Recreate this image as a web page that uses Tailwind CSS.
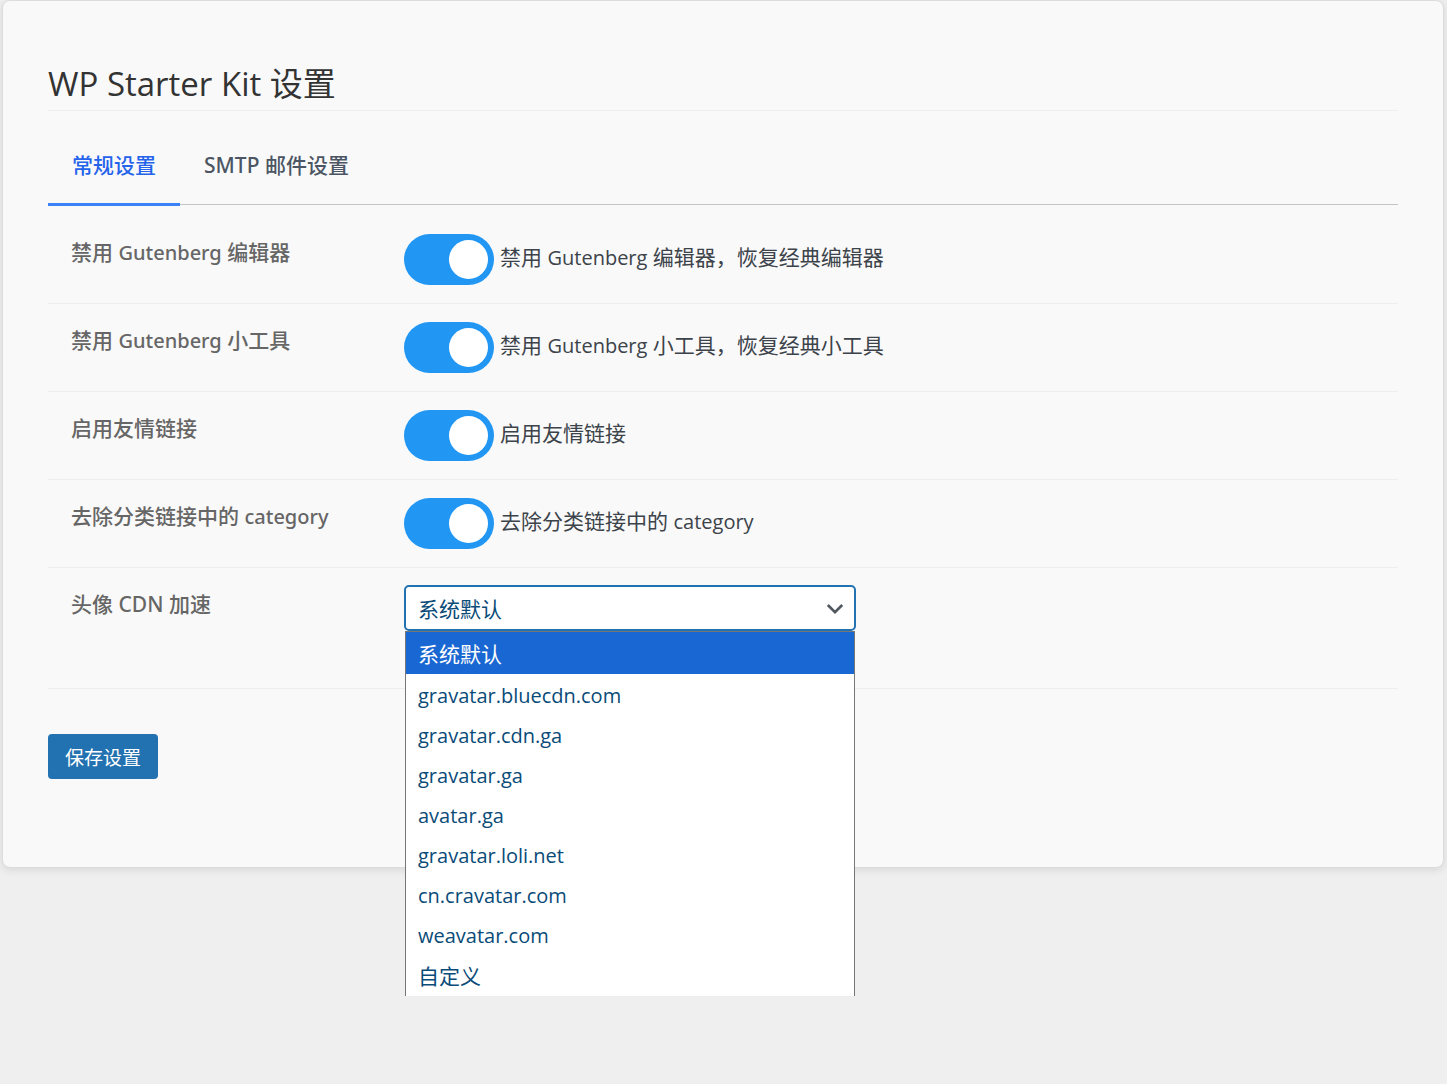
<!DOCTYPE html>
<html lang="zh-CN">
  <head>
    <meta charset="UTF-8" />
    <meta name="viewport" content="width=device-width, initial-scale=1.0" />
    <title>WP Starter Kit 设置</title>
    <script src="https://cdn.jsdelivr.net/npm/@tailwindcss/browser@4"></script>
  </head>
  <body class="min-h-screen bg-[#efefef] pl-[2px] pr-[3px] font-['Open_Sans','Noto_Sans_CJK_SC',sans-serif] text-[21px] leading-7 text-[#3c434a]">
    <main class="rounded-lg border border-[#dcdcdc] bg-[#f9f9f9] px-[45px] pt-[60px] pb-[88px] shadow-[0_2px_8px_rgba(0,0,0,0.1)]">
      <h1 class="border-b border-[#eeeeee] pb-1 text-[33px] leading-[45px] text-[#333333]">WP Starter Kit 设置</h1>

      <!-- Tabs -->
      <nav class="mt-8 flex border-b border-[#c3c4c7] font-['Noto_Sans','Noto_Sans_CJK_SC',sans-serif] font-medium">
        <a href="#general" class="-mb-[2px] border-b-3 border-[#3b82f6] px-6 pt-2 pb-6 text-[#2563eb]">常规设置</a>
        <a href="#smtp" class="px-6 pt-2 pb-6 text-[#4b5563]">SMTP 邮件设置</a>
      </nav>

      <form class="pt-[11px]">
        <div class="flex border-b border-[#eeeeee] py-[18px] pl-[23px]">
          <label for="disable-editor" class="w-[333px] shrink-0 pt-1 font-['Noto_Sans','Noto_Sans_CJK_SC',sans-serif] font-medium text-[#666666]">禁用 <span class="text-[20px]">Gutenberg</span> 编辑器</label>
          <div class="flex items-center gap-[6px]">
            <input id="disable-editor" type="checkbox" checked class="flex h-[51px] w-[90px] appearance-none items-center rounded-full bg-[#ccc] px-[6px] before:size-[39px] before:rounded-full before:bg-white checked:justify-end checked:bg-[#2196f3]" />
            <label for="disable-editor" class="pb-1">禁用 <span class="text-[20px]">Gutenberg</span> 编辑器，恢复经典编辑器</label>
          </div>
        </div>
        <div class="flex border-b border-[#eeeeee] py-[18px] pl-[23px]">
          <label for="disable-widgets" class="w-[333px] shrink-0 pt-1 font-['Noto_Sans','Noto_Sans_CJK_SC',sans-serif] font-medium text-[#666666]">禁用 <span class="text-[20px]">Gutenberg</span> 小工具</label>
          <div class="flex items-center gap-[6px]">
            <input id="disable-widgets" type="checkbox" checked class="flex h-[51px] w-[90px] appearance-none items-center rounded-full bg-[#ccc] px-[6px] before:size-[39px] before:rounded-full before:bg-white checked:justify-end checked:bg-[#2196f3]" />
            <label for="disable-widgets" class="pb-1">禁用 <span class="text-[20px]">Gutenberg</span> 小工具，恢复经典小工具</label>
          </div>
        </div>
        <div class="flex border-b border-[#eeeeee] py-[18px] pl-[23px]">
          <label for="enable-links" class="w-[333px] shrink-0 pt-1 font-['Noto_Sans','Noto_Sans_CJK_SC',sans-serif] font-medium text-[#666666]">启用友情链接</label>
          <div class="flex items-center gap-[6px]">
            <input id="enable-links" type="checkbox" checked class="flex h-[51px] w-[90px] appearance-none items-center rounded-full bg-[#ccc] px-[6px] before:size-[39px] before:rounded-full before:bg-white checked:justify-end checked:bg-[#2196f3]" />
            <label for="enable-links" class="pb-[6px]">启用友情链接</label>
          </div>
        </div>
        <div class="flex border-b border-[#eeeeee] py-[18px] pl-[23px]">
          <label for="no-category" class="w-[333px] shrink-0 pt-1 font-['Noto_Sans','Noto_Sans_CJK_SC',sans-serif] font-medium text-[#666666]">去除分类链接中的 <span class="text-[20px]">category</span></label>
          <div class="flex items-center gap-[6px]">
            <input id="no-category" type="checkbox" checked class="flex h-[51px] w-[90px] appearance-none items-center rounded-full bg-[#ccc] px-[6px] before:size-[39px] before:rounded-full before:bg-white checked:justify-end checked:bg-[#2196f3]" />
            <label for="no-category" class="pb-1">去除分类链接中的 <span class="text-[20px]">category</span></label>
          </div>
        </div>
        <div class="flex border-b border-[#eeeeee] pt-[17px] pb-[57px] pl-[23px]">
          <label for="avatar-cdn" class="w-[333px] shrink-0 pt-[5px] font-['Noto_Sans','Noto_Sans_CJK_SC',sans-serif] font-medium text-[#666666]">头像 CDN 加速</label>
          <div class="relative w-[452px]">
            <select id="avatar-cdn" class="block h-[46px] w-full appearance-none rounded-[5px] border-2 border-[#2271b1] bg-white px-3 pt-[2px] text-[#0a4b78]">
              <option>系统默认</option>
              <option>gravatar.bluecdn.com</option>
              <option>gravatar.cdn.ga</option>
              <option>gravatar.ga</option>
              <option>avatar.ga</option>
              <option>gravatar.loli.net</option>
              <option>cn.cravatar.com</option>
              <option>weavatar.com</option>
              <option>自定义</option>
            </select>
            <svg class="pointer-events-none absolute top-[18px] right-3 h-3 w-[18px]" viewBox="0 0 18 12" fill="none" stroke="#50575e" stroke-width="2.6">
              <path d="M1.8 2 9 9.2 16.2 2" />
            </svg>
            <!-- Opened option list -->
            <ul role="listbox" class="absolute inset-x-px top-[46px] border-x border-t border-[#767676] bg-white text-[20px] leading-9 text-[#0a4b78]">
              <li role="option" aria-selected="true" class="bg-[#1967d2] px-3 pt-[2px] text-[21px] leading-10 text-white">系统默认</li>
              <li role="option" class="px-3 pt-1">gravatar.bluecdn.com</li>
              <li role="option" class="px-3 pt-1">gravatar.cdn.ga</li>
              <li role="option" class="px-3 pt-1">gravatar.ga</li>
              <li role="option" class="px-3 pt-1">avatar.ga</li>
              <li role="option" class="px-3 pt-1">gravatar.loli.net</li>
              <li role="option" class="px-3 pt-1">cn.cravatar.com</li>
              <li role="option" class="px-3 pt-1">weavatar.com</li>
              <li role="option" class="px-3 pt-[2px] text-[21px] leading-10">自定义</li>
            </ul>
          </div>
        </div>
        <button type="submit" class="mt-[45px] h-[45px] w-[110px] rounded-[4px] bg-[#2271b1] pt-[2px] text-[19px] text-white">保存设置</button>
      </form>
    </main>
  </body>
</html>
